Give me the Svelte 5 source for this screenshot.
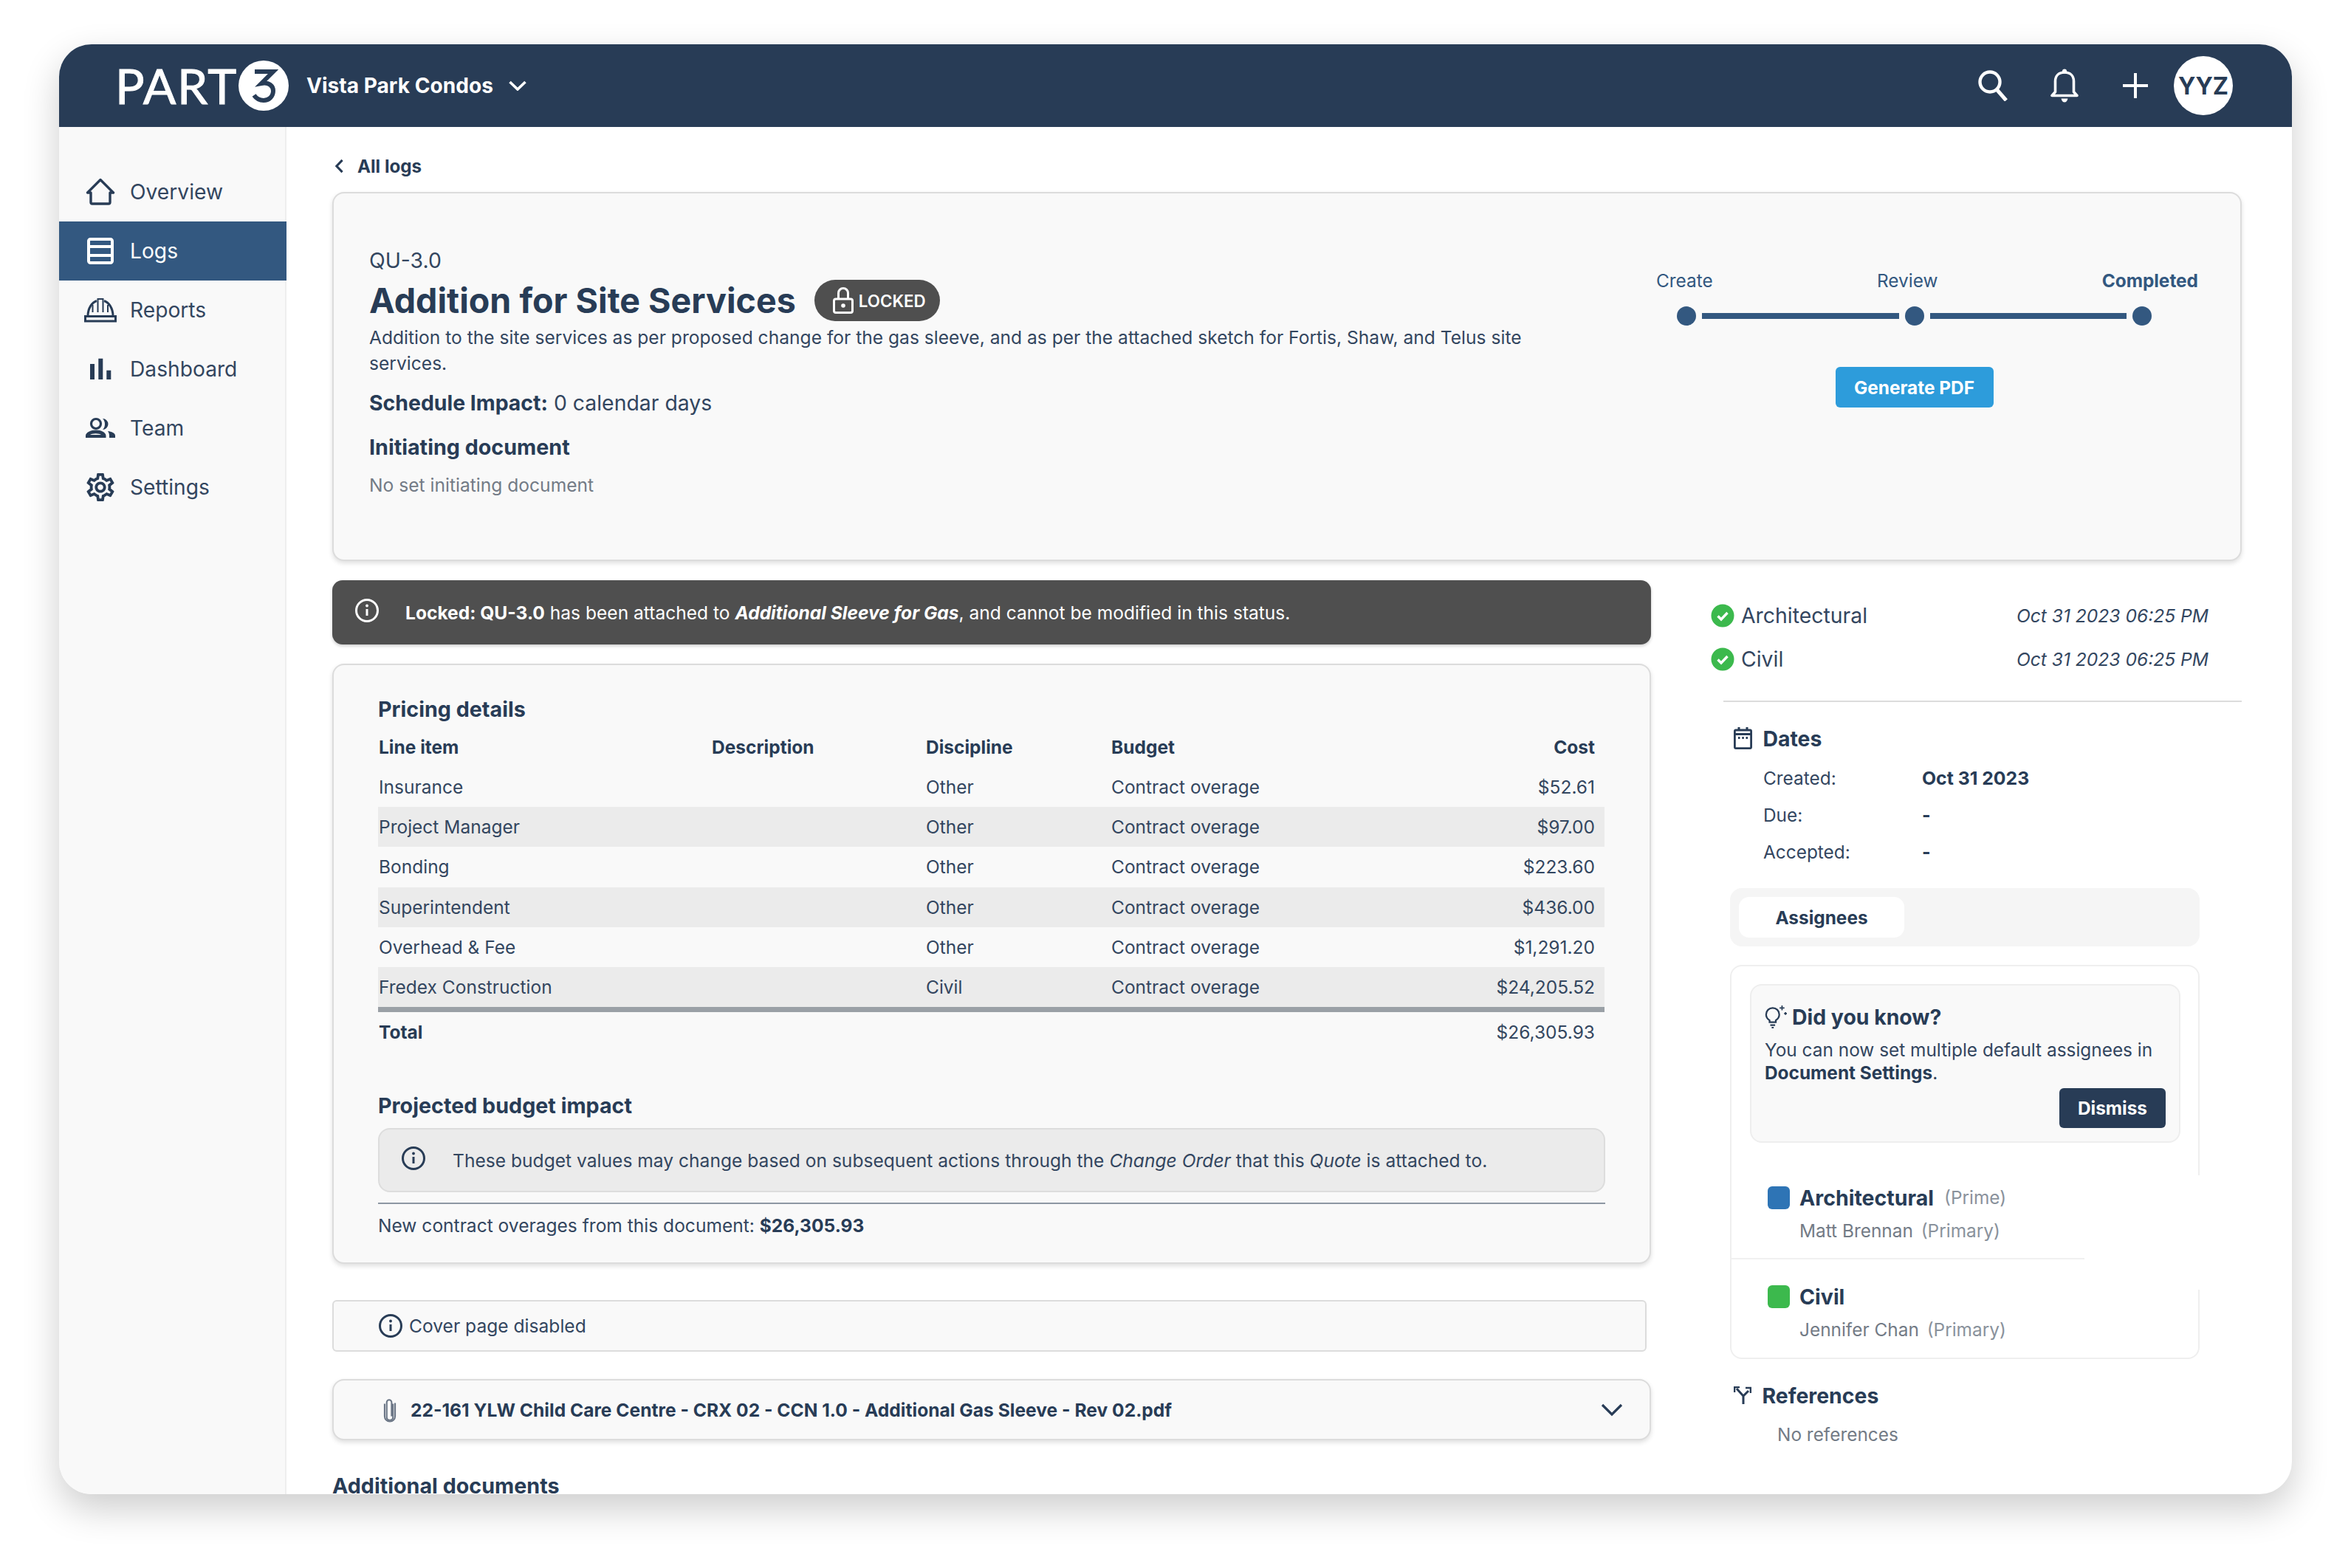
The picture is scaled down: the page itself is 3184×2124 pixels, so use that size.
<script>
  const navItems = ['Overview', 'Logs', 'Reports', 'Dashboard', 'Team', 'Settings']

  const lineItems = [
    ['Insurance', 'Other', '$52.61'],
    ['Project Manager', 'Other', '$97.00'],
    ['Bonding', 'Other', '$223.60'],
    ['Superintendent', 'Other', '$436.00'],
    ['Overhead & Fee', 'Other', '$1,291.20'],
    ['Fredex Construction', 'Civil', '$24,205.52'],
  ]

  const signoffs = ['Architectural', 'Civil']

  const dates = [
    ['Created:', 'Oct 31 2023'],
    ['Due:', '-'],
    ['Accepted:', '-'],
  ]
</script>

{#snippet infoIcon()}
  <svg class="info" viewBox="0 0 34 34" fill="none" stroke="currentColor" stroke-width="3">
    <circle cx="17" cy="17" r="14.5" />
    <path d="M17 15v9" />
    <circle cx="17" cy="10.5" r="1.9" fill="currentColor" stroke="none" />
  </svg>
{/snippet}

{#snippet checkIcon()}
  <svg class="check" viewBox="0 0 32 32">
    <circle cx="16" cy="16" r="15.5" fill="#3cb94d" />
    <path d="M9.5 16.5l4.5 4.5 8.5-9" fill="none" stroke="#fff" stroke-width="3.4" />
  </svg>
{/snippet}

{#snippet navIcon(name)}
  <svg class="nav-icon" viewBox="0 0 40 40" fill="none" stroke="currentColor" stroke-width="3.4">
    {#if name === 'Overview'}
      <path d="M2.5 21 20 3.5 37.5 21H33v13a2 2 0 0 1-2 2H9a2 2 0 0 1-2-2V21Z" stroke-linejoin="round" />
    {:else if name === 'Logs'}
      <rect x="4" y="4" width="32" height="32" rx="2.5" stroke-width="4" />
      <path d="M4 14h32M4 26h32" stroke-width="4" />
    {:else if name === 'Reports'}
      <path d="M-0.500 28.500h41v6.500h-41zM3 28C3 17 9 9.500 15 7.500M25 7.500C31 9.500 37 17 37 28" stroke-width="3" />
      <path d="M9.500 23V13M16.500 23V5h7v18M30 23V13" stroke-width="2" />
    {:else if name === 'Dashboard'}
      <g fill="currentColor" stroke="none">
        <rect x="6" y="13" width="6" height="21" />
        <rect x="17.300" y="5.700" width="6" height="28.300" />
        <rect x="28.300" y="21.700" width="6" height="12.300" />
      </g>
    {:else if name === 'Team'}
      <circle cx="14" cy="14" r="6.500" stroke-width="3.200" />
      <g fill="currentColor" stroke="none">
        <path d="M0 33v-3c0-4 7-7.500 14-7.500S27.500 26 27.500 30v3Zm6-4h15c-1.500-1-4-1.800-7.500-1.800S7.500 28 6 29Z" fill-rule="evenodd" />
        <path d="M23 7a7.500 7.500 0 0 1 0 15c2-2 3-4.500 3-7.500S25 9 23 7Z" />
        <path d="M30 24c5 .5 10 2.500 10 6v3h-8v-3c0-2.500-.8-4.500-2-6Z" />
      </g>
    {:else}
      <svg viewBox="1.500 1.500 21 21" width="40" height="40">
        <path fill="currentColor" stroke="none" d="M19.43 12.98c.04-.32.07-.64.07-.98 0-.34-.03-.66-.07-.98l2.11-1.65c.19-.15.24-.42.12-.64l-2-3.46c-.09-.16-.26-.25-.44-.25-.06 0-.12.01-.17.03l-2.49 1c-.52-.4-1.08-.73-1.69-.98l-.38-2.65C14.46 2.18 14.25 2 14 2h-4c-.25 0-.46.18-.49.42l-.38 2.65c-.61.25-1.17.59-1.69.98l-2.49-1c-.06-.02-.12-.03-.18-.03-.17 0-.34.09-.43.25l-2 3.46c-.13.22-.07.49.12.64l2.11 1.65c-.04.32-.07.65-.07.98 0 .33.03.66.07.98l-2.11 1.65c-.19.15-.24.42-.12.64l2 3.46c.09.16.26.25.44.25.06 0 .12-.01.17-.03l2.49-1c.52.4 1.08.73 1.69.98l.38 2.65c.03.24.24.42.49.42h4c.25 0 .46-.18.49-.42l.38-2.65c.61-.25 1.17-.59 1.69-.98l2.49 1c.06.02.12.03.18.03.17 0 .34-.09.43-.25l2-3.46c.12-.22.07-.49-.12-.64l-2.11-1.65zm-1.98-1.71c.04.31.05.52.05.73 0 .21-.02.43-.05.73l-.14 1.13.89.7 1.08.84-.7 1.21-1.27-.51-1.04-.42-.9.68c-.43.32-.84.56-1.25.73l-1.06.43-.16 1.13-.2 1.35h-1.4l-.19-1.35-.16-1.13-1.06-.43c-.43-.18-.83-.41-1.23-.71l-.91-.7-1.06.43-1.27.51-.7-1.21 1.08-.84.89-.7-.14-1.13c-.03-.31-.05-.54-.05-.74s.02-.43.05-.73l.14-1.13-.89-.7-1.08-.84.7-1.21 1.27.51 1.04.42.9-.68c.43-.32.84-.56 1.25-.73l1.06-.43.16-1.13.2-1.35h1.39l.19 1.35.16 1.13 1.06.43c.43.18.83.41 1.23.71l.91.7 1.06-.43 1.27-.51.7 1.21-1.07.85-.89.7.14 1.13zM12 8c-2.21 0-4 1.79-4 4s1.79 4 4 4 4-1.79 4-4-1.79-4-4-4zm0 6c-1.1 0-2-.9-2-2s.9-2 2-2 2 .9 2 2-.9 2-2 2z" />
      </svg>
    {/if}
  </svg>
{/snippet}

<div class="window">
  <header class="topbar">
    <div class="logo">
      <span class="logo-text">PART</span>
      <svg class="logo-mark" viewBox="0 0 68 68">
        <circle cx="34" cy="34" r="34" fill="#fff" />
        <path d="M22 15h25L31 31c11-2 16 4 16 10 0 8-6 13-13 13-5 0-9.500-2-13-7" fill="none" stroke="#283c56" stroke-width="6" />
      </svg>
    </div>
    <span class="project">Vista Park Condos</span>
    <svg class="project-caret" viewBox="0 0 24 14" fill="none" stroke="#fff" stroke-width="3.600">
      <path d="M1.500 2 12 12 22.500 2" />
    </svg>
    <div class="top-actions">
      <svg class="ic-search" viewBox="0 0 42 42" fill="none" stroke="#fff" stroke-width="4.400">
        <circle cx="16" cy="16" r="13.500" />
        <path d="M25 26l13 15" stroke-width="5" />
      </svg>
      <svg class="ic-bell" viewBox="0 0 38 46" fill="none" stroke="#fff" stroke-width="3.600">
        <path d="M2 36.500h34l-4.500-5V17C31.500 9.500 26.500 5 19 5S6.500 9.500 6.500 17v14.500Z" stroke-linejoin="round" />
        <circle cx="19" cy="3.500" r="3" fill="#fff" stroke="none" />
        <path d="M14.500 40.500h9c-.5 3-2.500 5-4.500 5s-4-2-4.500-5Z" fill="#fff" stroke="none" />
      </svg>
      <svg class="ic-plus" viewBox="0 0 34 34" fill="none" stroke="#fff" stroke-width="4">
        <path d="M17 0v34M0 17h34" />
      </svg>
      <div class="avatar">YYZ</div>
    </div>
  </header>

  <div class="frame">
    <nav class="sidebar">
      {#each navItems as item}
        <div class="nav-item" class:active={item === 'Logs'}>
          {@render navIcon(item)}
          <span>{item}</span>
        </div>
      {/each}
    </nav>

    <main class="content">
      <div class="back">
        <svg viewBox="0 0 14 22" fill="none" stroke="currentColor" stroke-width="3.400">
          <path d="M11.500 2 3 11l8.500 9" />
        </svg>
        <span>All logs</span>
      </div>

      <section class="card summary">
        <div class="summary-main">
          <div class="doc-code">QU-3.0</div>
          <div class="title-row">
            <h1>Addition for Site Services</h1>
            <span class="locked-pill">
              <svg viewBox="0 0 28 36" fill="none" stroke="#fff" stroke-width="3">
                <path d="M7.500 17V8a6.500 6.500 0 0 1 13 0v9" />
                <rect x="1.500" y="16" width="25" height="18.500" rx="2.500" />
                <circle cx="14" cy="25" r="2.800" fill="#fff" stroke="none" />
              </svg>
              LOCKED
            </span>
          </div>
          <p class="description">
            Addition to the site services as per proposed change for the gas sleeve, and as per the attached sketch for Fortis, Shaw, and Telus site services.
          </p>
          <p class="impact"><strong>Schedule Impact:</strong> 0 calendar days</p>
          <h2 class="initiating">Initiating document</h2>
          <p class="muted">No set initiating document</p>
        </div>

        <div class="stepper">
          <div class="step-labels">
            <span>Create</span>
            <span>Review</span>
            <strong>Completed</strong>
          </div>
          <div class="step-track">
            <div class="steps">
              <i class="dot"></i><i class="line"></i><i class="dot"></i><i class="line"></i><i class="dot"></i>
            </div>
            <button class="pdf">Generate PDF</button>
          </div>
        </div>
      </section>

      <div class="columns">
        <div class="left">
          <div class="banner">
            {@render infoIcon()}
            <p><strong>Locked: QU-3.0</strong> has been attached to <strong><em>Additional Sleeve for Gas</em></strong>, and cannot be modified in this status.</p>
          </div>

          <section class="card pricing">
            <h2>Pricing details</h2>
            <table>
              <colgroup>
                <col style="width:451px" />
                <col style="width:290px" />
                <col style="width:251px" />
                <col />
                <col style="width:300px" />
              </colgroup>
              <thead>
                <tr>
                  <th>Line item</th>
                  <th>Description</th>
                  <th>Discipline</th>
                  <th>Budget</th>
                  <th class="num">Cost</th>
                </tr>
              </thead>
              <tbody>
                {#each lineItems as row, i}
                  <tr class:stripe={i % 2 === 1}>
                    <td>{row[0]}</td>
                    <td></td>
                    <td>{row[1]}</td>
                    <td>Contract overage</td>
                    <td class="num">{row[2]}</td>
                  </tr>
                {/each}
              </tbody>
              <tfoot>
                <tr>
                  <th>Total</th>
                  <td></td>
                  <td></td>
                  <td></td>
                  <td class="num">$26,305.93</td>
                </tr>
              </tfoot>
            </table>

            <h2 class="projected">Projected budget impact</h2>
            <div class="note">
              {@render infoIcon()}
              <p>These budget values may change based on subsequent actions through the <em>Change Order</em> that this <em>Quote</em> is attached to.</p>
            </div>
            <p class="overage">New contract overages from this document: <strong>$26,305.93</strong></p>
          </section>

          <div class="cover">
            {@render infoIcon()}
            <span>Cover page disabled</span>
          </div>

          <div class="card attachment">
            <svg class="clip" viewBox="0 0 20 36" fill="none" stroke="currentColor" stroke-width="2.200">
              <path d="M14.500 8v19a4.500 4.500 0 0 1-9 0V6a3.500 3.500 0 0 1 7 0v20" transform="translate(0 1)" />
              <path d="M2.500 9v18a7.500 7.500 0 0 0 15 0V8" />
            </svg>
            <span>22-161 YLW Child Care Centre - CRX 02 - CCN 1.0 - Additional Gas Sleeve - Rev 02.pdf</span>
            <svg class="caret" viewBox="0 0 30 18" fill="none" stroke="currentColor" stroke-width="3.200">
              <path d="M2 2l13 13L28 2" />
            </svg>
          </div>

          <h2 class="additional">Additional documents</h2>
        </div>

        <aside class="right">
          {#each signoffs as name}
            <div class="signoff">
              {@render checkIcon()}
              <span class="signoff-name">{name}</span>
              <em>Oct 31 2023 06:25 PM</em>
            </div>
          {/each}

          <div class="rule"></div>

          <div class="side-head dates-head">
            <svg viewBox="0 0 25 30" fill="none" stroke="currentColor" stroke-width="2.800">
              <rect x="1.400" y="4" width="22.200" height="24.600" rx="1.500" />
              <path d="M1.400 9.500h22.200" stroke-width="3" />
              <path d="M7 0v4M18 0v4" stroke-width="3" />
              <path d="M6 14.500h2.500M11.300 14.500h2.500M16.500 14.500h2.500" />
            </svg>
            <h3>Dates</h3>
          </div>
          <dl class="dates">
            {#each dates as [label, value]}
              <dt>{label}</dt>
              <dd>{value}</dd>
            {/each}
          </dl>

          <div class="tabs">
            <span class="tab">Assignees</span>
          </div>

          <section class="assignees">
            <div class="tip">
              <div class="tip-head">
                <svg viewBox="0 0 32 34" fill="none" stroke="currentColor" stroke-width="2.400">
                  <path d="M7 22.500c-3-2-5-5-5-8.500a9.500 9.500 0 0 1 19 0c0 3.500-2 6.500-5 8.500v2.500H7Z" />
                  <path d="M8 29.500h7M10 33h3" />
                  <path d="M25 1v7M21.500 4.500h7M30 10.500v4M28 12.500h4" stroke-width="1.800" />
                </svg>
                <h4>Did you know?</h4>
              </div>
              <p>You can now set multiple default assignees in <strong>Document Settings</strong>.</p>
              <button class="dismiss">Dismiss</button>
            </div>

            <div class="assignee first">
              <i class="swatch blue"></i>
              <div class="who">
                <strong>Architectural</strong>
                <span class="role">(Prime)</span>
              </div>
              <div class="person">Matt Brennan <span class="role">(Primary)</span></div>
            </div>
            <div class="assignee">
              <i class="swatch green"></i>
              <div class="who">
                <strong>Civil</strong>
              </div>
              <div class="person">Jennifer Chan <span class="role">(Primary)</span></div>
            </div>
          </section>

          <div class="side-head refs-head">
            <svg viewBox="0 0 24 24" fill="none" stroke="currentColor" stroke-width="3">
              <path d="M13 24V13L4 3M13 13l7-7" />
              <path d="M1 8V1h7" stroke-width="2.600" />
              <path d="M16 2h7v7" stroke-width="2.600" />
            </svg>
            <h3>References</h3>
          </div>
          <p class="no-refs">No references</p>
        </aside>
      </div>
    </main>
  </div>
</div>

<style>
  :global(body) {
    margin: 0;
    background: #fff;
    font-family: Inter, 'Noto Sans', sans-serif;
    color: #33465f;
  }

  .window {
    box-sizing: border-box;
    width: 3024px;
    height: 1964px;
    margin: 60px 80px 100px;
    border-radius: 44px;
    overflow: hidden;
    background: #fff;
    box-shadow: 0 20px 50px rgba(0, 0, 0, 0.2);
  }

  h1, h2, h3, h4, p, dl, dd {
    margin: 0;
  }

  /* top bar */
  .topbar {
    display: flex;
    align-items: center;
    height: 112px;
    padding: 0 80px;
    background: #283c56;
    color: #fff;
  }

  .logo {
    display: flex;
    align-items: center;
    width: 255px;
  }

  .logo-text {
    width: 163px;
    margin-left: -4px;
    margin-right: 4px;
    font-family: Lato, sans-serif;
    font-size: 66px;
    line-height: 68px;
    letter-spacing: 1.5px;
    -webkit-text-stroke: 1px #fff;
  }

  .logo-mark {
    flex: none;
    width: 68px;
    height: 68px;
  }

  .project {
    font-size: 28.1px;
    font-weight: 680;
  }

  .project-caret {
    width: 24px;
    height: 14px;
    margin-left: 21px;
  }

  .top-actions {
    display: flex;
    align-items: center;
    margin-left: auto;
  }

  .ic-search {
    width: 42px;
    height: 42px;
  }

  .ic-bell {
    width: 38px;
    height: 46px;
    margin-left: 56px;
  }

  .ic-plus {
    width: 34px;
    height: 34px;
    margin-left: 60px;
  }

  .avatar {
    display: flex;
    align-items: center;
    justify-content: center;
    width: 80px;
    height: 80px;
    margin-left: 35px;
    border-radius: 50%;
    background: #fff;
    color: #283c56;
    font-size: 32px;
    font-weight: 700;
  }

  /* shell */
  .frame {
    display: flex;
    height: 1852px;
  }

  .sidebar {
    box-sizing: border-box;
    flex: none;
    width: 308px;
    padding-top: 48px;
    background: #f9f9f9;
    border-right: 2px solid #eee;
  }

  .nav-item {
    display: flex;
    align-items: center;
    gap: 20px;
    height: 80px;
    padding-left: 36px;
    font-size: 28.2px;
    color: #33465f;
  }

  .nav-item.active {
    margin-right: -2px;
    background: #335880;
    color: #fff;
  }

  .nav-icon {
    flex: none;
    width: 40px;
    height: 40px;
    overflow: visible;
    color: #283c56;
  }

  .active .nav-icon {
    color: #fff;
  }

  .content {
    flex: 1;
    min-width: 0;
    padding: 33px 68px 0 62px;
  }

  .back {
    display: flex;
    align-items: center;
    height: 40px;
    margin-bottom: 15px;
    font-size: 24.2px;
    font-weight: 680;
    color: #283c56;
  }

  .back svg {
    width: 13px;
    height: 20px;
    margin-left: 3px;
    margin-right: 18px;
  }

  .card {
    box-sizing: border-box;
    border: 2px solid #dcdcdc;
    border-radius: 16px;
    background: #f9f9f9;
    box-shadow: 0 3px 6px rgba(0, 0, 0, 0.13);
  }

  /* summary card */
  .summary {
    display: flex;
    justify-content: space-between;
    height: 500px;
    padding: 71px 57px 0 48px;
  }

  .summary-main {
    width: 1580px;
  }

  .doc-code {
    font-size: 28.4px;
    line-height: 40px;
  }

  .title-row {
    display: flex;
    align-items: center;
    height: 60px;
    margin-top: 4px;
  }

  h1 {
    font-size: 46.6px;
    font-weight: 700;
    color: #283c56;
  }

  .locked-pill {
    display: flex;
    align-items: center;
    gap: 7px;
    box-sizing: border-box;
    height: 56px;
    margin-left: 25px;
    padding: 0 19px 0 25px;
    border-radius: 28px;
    background: #4f4f4f;
    color: #fff;
    font-size: 22.3px;
    font-weight: 600;
  }

  .locked-pill svg {
    width: 28px;
    height: 36px;
  }

  .description {
    margin-top: 3px;
    font-size: 24.6px;
    line-height: 35px;
  }

  .impact {
    margin-top: 16px;
    font-size: 28.4px;
    line-height: 40px;
  }

  strong {
    font-weight: 680;
    color: #283c56;
  }

  .initiating {
    margin-top: 20px;
    font-size: 28.7px;
    line-height: 40px;
    font-weight: 680;
    color: #283c56;
  }

  .muted {
    margin-top: 14px;
    font-size: 24.6px;
    line-height: 34px;
    color: #737b86;
  }

  /* stepper */
  .stepper {
    flex: none;
    width: 734px;
    margin-top: 30px;
    color: #335880;
  }

  .step-labels {
    display: flex;
    justify-content: space-between;
    font-size: 24.4px;
    line-height: 34px;
  }

  .step-labels strong {
    color: #335880;
  }

  .step-track {
    display: flex;
    flex-direction: column;
    align-items: center;
    margin: 18px 63px 0 28px;
  }

  .steps {
    display: flex;
    align-items: center;
    gap: 8px;
    width: 100%;
  }

  .dot {
    flex: none;
    width: 26px;
    height: 26px;
    border-radius: 50%;
    background: #335880;
  }

  .line {
    flex: 1;
    height: 8px;
    background: #335880;
  }

  .pdf {
    width: 214px;
    height: 55px;
    margin-top: 56px;
    border: 0;
    border-radius: 6px;
    background: #2d9cdb;
    color: #fff;
    font: 680 24.4px Inter, sans-serif;
  }

  /* columns under summary */
  .columns {
    display: flex;
  }

  .left {
    flex: none;
    width: 1786px;
  }

  .right {
    flex: 1;
    min-width: 0;
    padding-top: 44px;
  }

  .banner {
    display: flex;
    align-items: center;
    gap: 35px;
    box-sizing: border-box;
    height: 87px;
    margin-top: 26px;
    padding-left: 30px;
    border-radius: 14px;
    background: #4f4f4f;
    color: #fff;
    font-size: 24.55px;
    box-shadow: 0 2px 4px rgba(0, 0, 0, 0.2);
  }

  .banner strong {
    color: #fff;
  }

  .info {
    flex: none;
    width: 34px;
    height: 34px;
  }

  .banner .info {
    margin-bottom: 6px;
  }

  /* pricing */
  .pricing {
    height: 813px;
    margin-top: 26px;
    padding: 40px 60px 0;
  }

  .pricing h2 {
    font-size: 28.7px;
    line-height: 40px;
    font-weight: 680;
    color: #283c56;
  }

  table {
    width: 1661px;
    margin: 11px 0 0 0;
    border-collapse: separate;
    border-spacing: 0;
    table-layout: fixed;
    font-size: 24.5px;
  }

  th {
    padding: 0 0 0 1px;
    text-align: left;
    font-weight: 680;
    color: #283c56;
  }

  td {
    padding: 0 0 0 1px;
  }

  thead tr {
    height: 47px;
  }

  thead th {
    padding-bottom: 7px;
  }

  tbody tr {
    height: 54.2px;
  }

  .stripe td {
    background: #ebebeb;
  }

  tfoot tr {
    height: 61px;
  }

  tfoot th, tfoot td {
    border-top: 7px solid #9aa0a6;
  }

  .num {
    padding-right: 13px;
    text-align: right;
  }

  .pricing .projected {
    margin-top: 53px;
  }

  .note {
    display: flex;
    align-items: center;
    gap: 36px;
    box-sizing: border-box;
    height: 87px;
    margin-top: 10px;
    padding-left: 29px;
    border: 2px solid #ddd;
    border-radius: 16px;
    background: #ebebeb;
    font-size: 24.6px;
    color: #33465f;
  }

  .note .info {
    margin-bottom: 6px;
    color: #283c56;
  }

  .overage {
    margin-top: 14px;
    padding-top: 12px;
    border-top: 2px solid #8d97a3;
    font-size: 24.55px;
    line-height: 34px;
  }

  /* cover + attachment */
  .cover {
    display: flex;
    align-items: center;
    gap: 8px;
    box-sizing: border-box;
    width: 1780px;
    height: 70px;
    margin-top: 49px;
    padding-left: 60px;
    border: 2px solid #dcdcdc;
    border-radius: 6px;
    background: #f9f9f9;
    font-size: 24.6px;
  }

  .cover .info {
    color: #283c56;
  }

  .attachment {
    display: flex;
    align-items: center;
    height: 83px;
    margin-top: 37px;
    padding: 0 36px 0 66px;
    font-size: 24.6px;
    font-weight: 680;
    color: #283c56;
  }

  .clip {
    flex: none;
    width: 20px;
    height: 34px;
    margin-right: 18px;
    color: #6b7686;
  }

  .caret {
    width: 30px;
    height: 18px;
    margin-left: auto;
  }

  .additional {
    margin-top: 42px;
    font-size: 28.7px;
    line-height: 40px;
    font-weight: 680;
    color: #283c56;
  }

  /* right side */
  .signoff {
    display: flex;
    align-items: center;
    height: 59px;
    margin-left: 81px;
    margin-right: 45px;
    font-size: 28.4px;
  }

  .check {
    width: 32px;
    height: 32px;
    margin-right: 9px;
  }

  .signoff em {
    margin-left: auto;
    font-size: 24.6px;
  }

  .rule {
    height: 2px;
    margin: 27px 0 0 98px;
    background: #dcdcdc;
  }

  .side-head {
    display: flex;
    align-items: center;
    height: 40px;
    margin-left: 112px;
    color: #283c56;
  }

  .side-head svg {
    width: 25px;
    height: 30px;
    margin-right: 14.5px;
    flex: none;
  }

  .side-head h3 {
    font-size: 28.4px;
    font-weight: 680;
  }

  .dates-head {
    margin-top: 29px;
  }

  .refs-head svg {
    width: 24px;
    height: 24px;
  }

  .dates {
    display: grid;
    grid-template-columns: 215px 1fr;
    grid-auto-rows: 50px;
    align-items: center;
    margin: 9px 0 0 152px;
    font-size: 24.4px;
  }

  dd {
    font-size: 24.8px;
    font-weight: 680;
    color: #283c56;
  }

  .tabs {
    box-sizing: border-box;
    width: 636px;
    height: 79px;
    margin: 24px 0 0 107px;
    padding: 12px;
    border-radius: 16px;
    background: #f5f5f5;
  }

  .tab {
    display: flex;
    align-items: center;
    justify-content: center;
    width: 224px;
    height: 55px;
    border-radius: 14px;
    background: #fff;
    font-size: 24.4px;
    font-weight: 680;
    color: #283c56;
  }

  .assignees {
    box-sizing: border-box;
    width: 636px;
    height: 534px;
    margin: 25px 0 0 107px;
    padding-top: 24px;
    border: 2px solid #efefef;
    border-radius: 16px;
  }

  .tip {
    box-sizing: border-box;
    display: flex;
    flex-direction: column;
    width: 583px;
    height: 215px;
    margin-left: 25px;
    padding: 24px 18px 0;
    border: 2px solid #eee;
    border-radius: 16px;
    background: #f9f9f9;
  }

  .tip-head {
    display: flex;
    align-items: center;
    height: 36px;
    color: #283c56;
  }

  .tip-head svg {
    width: 30px;
    height: 32px;
    margin-right: 7px;
  }

  .tip-head h4 {
    font-size: 28.4px;
    font-weight: 680;
  }

  .tip p {
    margin-top: 12px;
    font-size: 24.4px;
    line-height: 31px;
  }

  .dismiss {
    align-self: flex-end;
    width: 144px;
    height: 54px;
    margin-top: 5px;
    border: 0;
    border-radius: 6px;
    background: #283c56;
    color: #fff;
    font: 680 24.4px Inter, sans-serif;
  }

  .assignee {
    display: grid;
    grid-template-columns: 30px 1fr;
    column-gap: 13px;
    align-items: center;
    padding: 32px 0 0 49px;
  }

  .assignee.first {
    position: relative;
    margin: 44px -2px 0 0;
    padding: 12px 0 22px 49px;
    background: #fff;
  }

  .assignee.first::after {
    content: '';
    position: absolute;
    left: 0;
    bottom: 0;
    width: 478px;
    height: 2px;
    background: #f0f0f0;
  }

  .assignee:not(.first) {
    background: linear-gradient(#fff 41px, transparent 41px);
    margin-right: -2px;
  }

  .swatch {
    width: 30px;
    height: 31px;
    border-radius: 6px;
  }

  .blue {
    background: #2e74b5;
  }

  .green {
    background: #3cb94d;
  }

  .who {
    display: flex;
    align-items: center;
    gap: 10px;
    height: 36px;
    font-size: 28.5px;
  }

  .role {
    margin-left: 4px;
    font-size: 24.4px;
    font-weight: 400;
    color: #8a929c;
  }

  .person {
    grid-column: 2;
    margin-top: 10px;
    font-size: 24.4px;
    line-height: 34px;
    color: #737b86;
  }

  .refs-head {
    margin-top: 29px;
  }

  .no-refs {
    margin: 16px 0 0 171px;
    font-size: 24.4px;
    line-height: 34px;
    color: #737b86;
  }
</style>
